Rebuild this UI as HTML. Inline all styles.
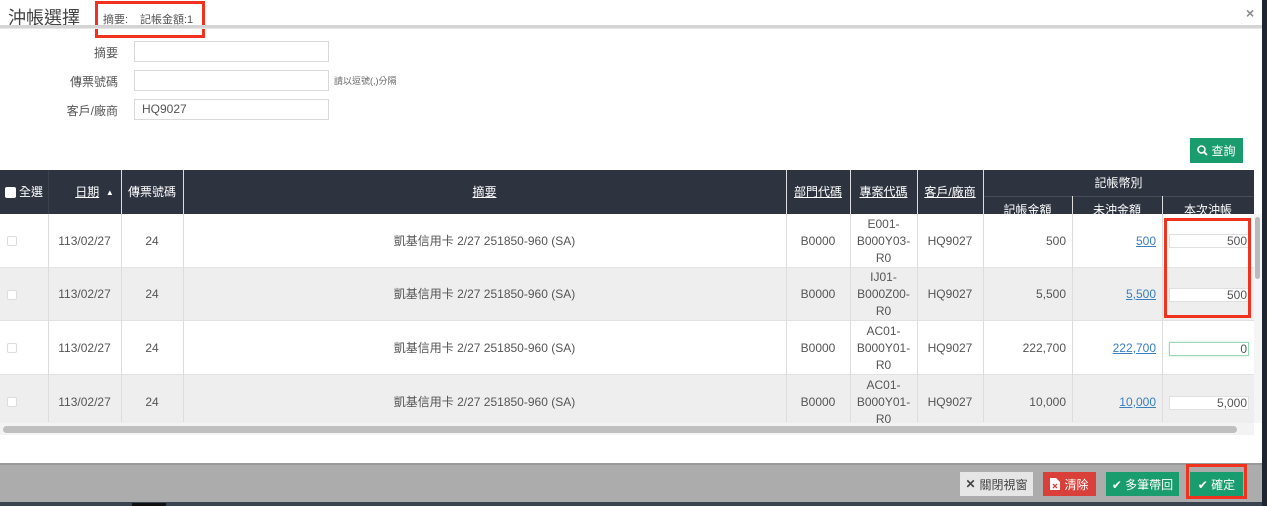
<!DOCTYPE html>
<html><head><meta charset="utf-8"><style>
*{box-sizing:border-box;margin:0;padding:0}
body{width:1267px;height:506px;overflow:hidden;background:#fff;font-family:"Liberation Sans","Noto Sans CJK TC",sans-serif;color:#555;position:relative}
.a{position:absolute}
.title{left:8px;top:4px;font-size:18px;color:#444}
.red{border:3px solid #f0321e}
.lbl{font-size:12px;color:#555;text-align:right;width:118px;left:0}
.inp{left:134px;width:195px;height:21px;border:1px solid #d9d9d9;font-size:12px;padding:2px 7px;color:#555}
.hd{background:#2d3440;color:#fff;font-size:12px}
.cell{position:absolute;display:flex;align-items:center;justify-content:center;font-size:12px;text-align:center;line-height:17px}
.vl{position:absolute;width:1px;background:#ddd}
.u{text-decoration:underline}
.lnk{color:#3a7fc0;text-decoration:underline}
.ib{position:absolute;height:14px;background:#fff;border:1px solid #e0e0e0;font-size:12px;text-align:right;padding-right:1px;line-height:12px;color:#555}
.btn{position:absolute;top:472px;height:24px;color:#fff;font-size:12px;display:flex;align-items:center;justify-content:center;gap:4px}
</style></head><body>
<div class="a title">沖帳選擇</div>
<div class="a red" style="left:95px;top:1px;width:110px;height:37px"></div>
<div class="a" style="left:103px;top:11px;font-size:11px;color:#555">摘要:</div>
<div class="a" style="left:140px;top:11px;font-size:11px;color:#555">記帳金額:1</div>
<div class="a" style="left:1246px;top:5px;font-size:14px;color:#888;font-weight:bold">×</div>
<div class="a" style="left:0;top:25px;width:1262px;height:4px;background:#d4d4d4;border-bottom:1px solid #e8e8e8"></div>
<div class="a" style="left:1262px;top:0;width:5px;height:506px;background:#1e2530"></div>

<div class="a lbl" style="top:44px">摘要</div>
<div class="a inp" style="top:41px"></div>
<div class="a lbl" style="top:73px">傳票號碼</div>
<div class="a inp" style="top:70px"></div>
<div class="a" style="left:334px;top:74px;font-size:9px;color:#666">請以逗號(,)分隔</div>
<div class="a lbl" style="top:102px">客戶/廠商</div>
<div class="a inp" style="top:99px">HQ9027</div>

<div class="a" style="left:1190px;top:138px;width:53px;height:25px;background:#1a9d6e;color:#fff;font-size:12px;display:flex;align-items:center;justify-content:center;gap:3px"><svg width="11" height="11" viewBox="0 0 11 11"><circle cx="4.5" cy="4.5" r="3.5" fill="none" stroke="#fff" stroke-width="1.6"/><path d="M7 7l3 3" stroke="#fff" stroke-width="1.8"/></svg>查詢</div>

<div class="a hd" style="left:0;top:170px;width:1254px;height:44px"></div>
<div class="vl" style="left:48px;top:170px;height:252px;background:#3a424e"></div>
<div class="cell" style="left:0;top:170px;width:48px;height:44px;color:#fff"><span style="width:11px;height:11px;background:#fff;border-radius:2px;margin-right:3px"></span>全選</div>
<div class="cell" style="left:58px;top:170px;width:73px;height:44px;color:#fff"><span class="u">日期</span>&nbsp;&nbsp;<span style="font-size:8px">▲</span></div>
<div class="cell" style="left:121px;top:170px;width:62px;height:44px;color:#fff">傳票號碼</div>
<div class="cell" style="left:183px;top:170px;width:603px;height:44px;color:#fff"><span class="u">摘要</span></div>
<div class="cell" style="left:786px;top:170px;width:64px;height:44px;color:#fff"><span class="u">部門代碼</span></div>
<div class="cell" style="left:850px;top:170px;width:67px;height:44px;color:#fff"><span class="u">專案代碼</span></div>
<div class="cell" style="left:917px;top:170px;width:66px;height:44px;color:#fff"><span class="u">客戶/廠商</span></div>
<div class="cell" style="left:983px;top:170px;width:271px;height:26px;color:#fff">記帳幣別</div>
<div class="a" style="left:983px;top:196px;width:271px;height:1px;background:#444c58"></div>
<div class="cell" style="left:983px;top:197px;width:89px;height:22px;color:#fff;align-items:flex-end">記帳金額</div>
<div class="cell" style="left:1072px;top:197px;width:90px;height:22px;color:#fff;align-items:flex-end">未沖金額</div>
<div class="cell" style="left:1162px;top:197px;width:92px;height:22px;color:#fff;align-items:flex-end">本次沖帳</div>

<div class="a" style="left:0;top:214px;width:1254px;height:209px;overflow:hidden">
 <div class="a" style="left:0;top:0;width:1254px;height:54px;background:#fff"></div>
 <div class="a" style="left:0;top:54px;width:1254px;height:53px;background:#eee"></div>
 <div class="a" style="left:0;top:107px;width:1254px;height:54px;background:#fff"></div>
 <div class="a" style="left:0;top:161px;width:1254px;height:54px;background:#eee"></div>
 <div class="a" style="left:0;top:53px;width:1254px;height:1px;background:#e2e2e2"></div>
 <div class="a" style="left:0;top:106px;width:1254px;height:1px;background:#e2e2e2"></div>
 <div class="a" style="left:0;top:160px;width:1254px;height:1px;background:#e2e2e2"></div>
</div>
<div class="vl" style="left:121px;top:170px;height:252px"></div>
<div class="vl" style="left:183px;top:170px;height:252px"></div>
<div class="vl" style="left:786px;top:170px;height:252px"></div>
<div class="vl" style="left:850px;top:170px;height:252px"></div>
<div class="vl" style="left:917px;top:170px;height:252px"></div>
<div class="vl" style="left:983px;top:170px;height:252px"></div>
<div class="vl" style="left:1072px;top:196px;height:226px"></div>
<div class="vl" style="left:1162px;top:196px;height:226px"></div>
<div class="vl" style="left:48px;top:214px;height:208px"></div>

<div class="a" style="left:7px;top:236px;width:10px;height:10px;border:1px solid #ddd;background:#fff;border-radius:2px"></div>
<div class="a" style="left:7px;top:290px;width:10px;height:10px;border:1px solid #ddd;background:#fff;border-radius:2px"></div>
<div class="a" style="left:7px;top:343px;width:10px;height:10px;border:1px solid #ddd;background:#fff;border-radius:2px"></div>
<div class="a" style="left:7px;top:397px;width:10px;height:10px;border:1px solid #ddd;background:#fff;border-radius:2px"></div>

<div class="cell" style="left:48px;top:214px;width:73px;height:54px">113/02/27</div>
<div class="cell" style="left:48px;top:268px;width:73px;height:53px">113/02/27</div>
<div class="cell" style="left:48px;top:321px;width:73px;height:54px">113/02/27</div>
<div class="cell" style="left:48px;top:375px;width:73px;height:54px">113/02/27</div>
<div class="cell" style="left:121px;top:214px;width:62px;height:54px">24</div>
<div class="cell" style="left:121px;top:268px;width:62px;height:53px">24</div>
<div class="cell" style="left:121px;top:321px;width:62px;height:54px">24</div>
<div class="cell" style="left:121px;top:375px;width:62px;height:54px">24</div>
<div class="cell" style="left:183px;top:214px;width:603px;height:54px">凱基信用卡 2/27 251850-960 (SA)</div>
<div class="cell" style="left:183px;top:268px;width:603px;height:53px">凱基信用卡 2/27 251850-960 (SA)</div>
<div class="cell" style="left:183px;top:321px;width:603px;height:54px">凱基信用卡 2/27 251850-960 (SA)</div>
<div class="cell" style="left:183px;top:375px;width:603px;height:54px">凱基信用卡 2/27 251850-960 (SA)</div>
<div class="cell" style="left:786px;top:214px;width:64px;height:54px">B0000</div>
<div class="cell" style="left:786px;top:268px;width:64px;height:53px">B0000</div>
<div class="cell" style="left:786px;top:321px;width:64px;height:54px">B0000</div>
<div class="cell" style="left:786px;top:375px;width:64px;height:54px">B0000</div>
<div class="cell" style="left:850px;top:214px;width:67px;height:54px">E001-<br>B000Y03-<br>R0</div>
<div class="cell" style="left:850px;top:268px;width:67px;height:53px">IJ01-<br>B000Z00-<br>R0</div>
<div class="cell" style="left:850px;top:321px;width:67px;height:54px">AC01-<br>B000Y01-<br>R0</div>
<div class="a" style="left:850px;top:375px;width:67px;height:48px;overflow:hidden"><div class="cell" style="left:0;top:0;width:67px;height:54px">AC01-<br>B000Y01-<br>R0</div></div>
<div class="cell" style="left:917px;top:214px;width:66px;height:54px">HQ9027</div>
<div class="cell" style="left:917px;top:268px;width:66px;height:53px">HQ9027</div>
<div class="cell" style="left:917px;top:321px;width:66px;height:54px">HQ9027</div>
<div class="cell" style="left:917px;top:375px;width:66px;height:54px">HQ9027</div>
<div class="cell" style="left:983px;top:214px;width:83px;height:54px;justify-content:flex-end">500</div>
<div class="cell" style="left:983px;top:268px;width:83px;height:53px;justify-content:flex-end">5,500</div>
<div class="cell" style="left:983px;top:321px;width:83px;height:54px;justify-content:flex-end">222,700</div>
<div class="cell" style="left:983px;top:375px;width:83px;height:54px;justify-content:flex-end">10,000</div>
<div class="cell" style="left:1072px;top:214px;width:84px;height:54px;justify-content:flex-end"><span class="lnk">500</span></div>
<div class="cell" style="left:1072px;top:268px;width:84px;height:53px;justify-content:flex-end"><span class="lnk">5,500</span></div>
<div class="cell" style="left:1072px;top:321px;width:84px;height:54px;justify-content:flex-end"><span class="lnk">222,700</span></div>
<div class="cell" style="left:1072px;top:375px;width:84px;height:54px;justify-content:flex-end"><span class="lnk">10,000</span></div>
<div class="ib" style="left:1169px;top:234px;width:80px">500</div>
<div class="ib" style="left:1169px;top:288px;width:80px">500</div>
<div class="ib" style="left:1169px;top:342px;width:80px;border-color:#9fd8b8;box-shadow:0 0 2px #b8e6cc">0</div>
<div class="ib" style="left:1169px;top:396px;width:80px">5,000</div>
<div class="a red" style="left:1164px;top:218px;width:87px;height:100px"></div>

<div class="a" style="left:1254px;top:214px;width:8px;height:209px;background:#f5f5f5"></div>
<div class="a" style="left:1255px;top:217px;width:5px;height:62px;background:#bbb;border-radius:3px"></div>
<div class="a" style="left:0;top:423px;width:1254px;height:12px;background:#f3f3f3"></div>
<div class="a" style="left:3px;top:426px;width:1234px;height:7px;background:#bfbfbf;border-radius:4px"></div>

<div class="a" style="left:0;top:463px;width:1262px;height:2px;background:#999"></div>
<div class="a" style="left:0;top:465px;width:1262px;height:37px;background:#acacac"></div>
<div class="a" style="left:0;top:502px;width:1262px;height:4px;background:#3a4450"></div>
<div class="a" style="left:132px;top:503px;width:34px;height:3px;background:#111"></div>
<div class="btn" style="left:960px;width:73px;background:#e6e6e6;color:#444"><b style="font-size:12px">✕</b> 關閉視窗</div>
<div class="btn" style="left:1043px;width:53px;background:#d9403a"><svg width="10" height="12" viewBox="0 0 10 12"><path d="M0 0h6l4 4v8H0z" fill="#fff"/><path d="M3 6l4 4M7 6l-4 4" stroke="#d9403a" stroke-width="1.3"/></svg>清除</div>
<div class="btn" style="left:1106px;width:73px;background:#1a9d6e">✔ 多筆帶回</div>
<div class="btn" style="left:1190px;width:53px;background:#1a9d6e">✔ 確定</div>
<div class="a red" style="left:1186px;top:464px;width:61px;height:35px"></div>
</body></html>
